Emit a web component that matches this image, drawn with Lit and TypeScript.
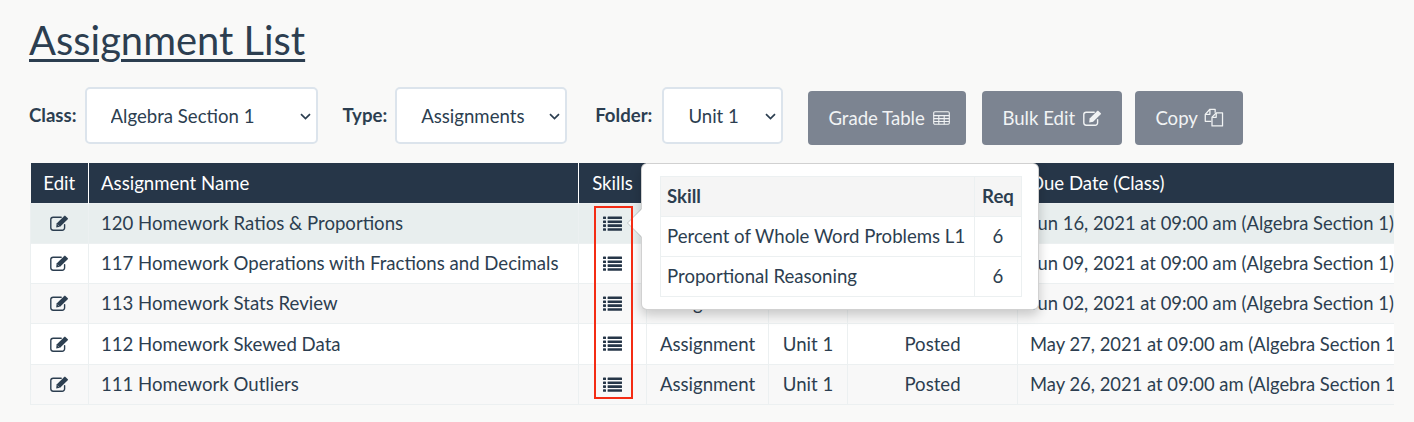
import { LitElement, html, css, svg } from "lit";
import { customElement } from "lit/decorators.js";

const editIcon = (cls: string) => html`<svg class=${cls} viewBox="0 0 19 16" fill="none">
  <path d="M14.6 9.6v3.2a2.4 2.4 0 0 1-2.4 2.4H3.2A2.4 2.4 0 0 1 .8 12.8V4.6a2.4 2.4 0 0 1 2.4-2.4h8" stroke="currentColor" stroke-width="1.4" stroke-linecap="round"/>
  <path d="M6.6 8.4 14 1.2l.9-.6 3.2 3-.6.9-7.4 7.3-3.9.6z" fill="currentColor"/>
  <path d="M7.6 9.6l2 2" stroke="#fff" stroke-opacity=".5" stroke-width=".8"/>
</svg>`;

const listIcon = html`<svg class="list" viewBox="0 0 19 15" fill="currentColor">
  <rect x="0" y="0.5" width="3" height="2.6" rx=".6"/><rect x="4.6" y="0.5" width="14.4" height="2.6" rx=".4"/>
  <rect x="0" y="4.4" width="3" height="2.6" rx=".6"/><rect x="4.6" y="4.4" width="14.4" height="2.6" rx=".4"/>
  <rect x="0" y="8.3" width="3" height="2.6" rx=".6"/><rect x="4.6" y="8.3" width="14.4" height="2.6" rx=".4"/>
  <rect x="0" y="12.2" width="3" height="2.6" rx=".6"/><rect x="4.6" y="12.2" width="14.4" height="2.6" rx=".4"/>
</svg>`;

const tableIcon = html`<svg class="btn-icon" viewBox="0 0 17 14" fill="none" stroke="currentColor" stroke-width="1.1">
  <rect x=".7" y=".7" width="15.6" height="12.6" rx="1.2"/>
  <path d="M.7 4.6h15.6M.7 7.6h15.6M.7 10.5h15.6M5.8 4.6v8.7M11.2 4.6v8.7"/>
</svg>`;

const copyIcon = html`<svg class="btn-icon copy" viewBox="0 0 19 18" fill="none" stroke="currentColor" stroke-width="1.2" stroke-linejoin="round">
  <path d="M7 12.6H1.2V6L5.6 1.2h5v3.4"/><path d="M5.6 1.4v4.6H1.4"/>
  <path d="M7.6 17V8.8l4-4.2h6v12.4z"/><path d="M11.6 4.8v4H7.8"/>
</svg>`;

const chevron = svg`<path d="M1 1.2 5.5 5.6 10 1.2" fill="none" stroke="currentColor" stroke-width="1.7"/>`;

interface Row { name: string; type: string; folder: string; status: string; due: string }
const rows: Row[] = [
  { name: "120 Homework Ratios & Proportions", type: "Assignment", folder: "Unit 1", status: "Posted", due: "Jun 16, 2021 at 09:00 am (Algebra Section 1)" },
  { name: "117 Homework Operations with Fractions and Decimals", type: "Assignment", folder: "Unit 1", status: "Posted", due: "Jun 09, 2021 at 09:00 am (Algebra Section 1)" },
  { name: "113 Homework Stats Review", type: "Assignment", folder: "Unit 1", status: "Posted", due: "Jun 02, 2021 at 09:00 am (Algebra Section 1)" },
  { name: "112 Homework Skewed Data", type: "Assignment", folder: "Unit 1", status: "Posted", due: "May 27, 2021 at 09:00 am (Algebra Section 1)" },
  { name: "111 Homework Outliers", type: "Assignment", folder: "Unit 1", status: "Posted", due: "May 26, 2021 at 09:00 am (Algebra Section 1)" },
];

@customElement("app-root")
export class AppRoot extends LitElement {
  static styles = css`
    :host {
      display: block;
      width: 1414px;
      height: 422px;
      box-sizing: border-box;
      padding: 16px 20px 0 29px;
      background: #f9f9f8;
      color: #2c3e50;
      font-family: Lato, "Open Sans", sans-serif;
      font-size: 18.6px;
      overflow: hidden;
    }
    h1 {
      margin: 0;
      font-size: 39.9px;
      line-height: 48px;
      font-weight: 400;
      text-decoration: underline;
      text-decoration-thickness: 3px;
      text-underline-offset: 4px;
      color: #2c3e50;
    }
    .toolbar {
      display: flex;
      align-items: center;
      margin-top: 22px;
      height: 58px;
    }
    label { font-weight: 700; font-size: 18.6px; margin-right: 8px; white-space: nowrap; }
    label.lf { margin-right: 10px; }
    .sel { position: relative; display: block; height: 57px; margin-right: 25px; flex: none; }
    .sel.w2box { margin-right: 28px; }
    select {
      appearance: none;
      height: 57px;
      border: 2px solid #dce4ec;
      border-radius: 5px;
      background: #fff;
      color: #2c3e50;
      font: 400 18.6px Lato, sans-serif;
      padding: 2px 0 0 24px;
      box-sizing: border-box;
      display: block;
    }
    .w1 { width: 233px; }
    .w2 { width: 172px; }
    .w3 { width: 121px; }
    .chev {
      position: absolute;
      right: 7px;
      top: 26px;
      width: 11px;
      height: 7px;
      color: #2c3e50;
      pointer-events: none;
    }
    .btn {
      display: flex;
      align-items: center;
      justify-content: space-between;
      flex: none;
      height: 54px;
      margin-top: 5px;
      box-sizing: border-box;
      padding: 0 20px;
      background: #7c8491;
      color: #f1f3f4;
      border-radius: 4px;
      font-size: 18.6px;
      white-space: nowrap;
    }
    .b1 { width: 158px; margin-right: 16px; padding-right: 16px; }
    .b2 { width: 140px; margin-right: 13px; }
    .b3 { width: 108px; padding-right: 19px; }
    .btn-icon { width: 17px; height: 14px; display: block; }
    .btn-icon.bulk { width: 19px; height: 16px; }
    .btn-icon.copy { height: 19px; width: 20px; }
    .edit-btn { width: 19px; height: 16px; display: block; }
    .wrap {
      position: relative;
      margin-top: 19px;
      width: 1364px;
      margin-left: 1px;
      overflow: hidden;
      height: 245px;
    }
    table.main {
      table-layout: fixed;
      border-collapse: collapse;
      width: 1420px;
    }
    .main th {
      background: #263648;
      color: #fff;
      font-weight: 400;
      font-size: 18.6px;
      text-align: left;
      height: 40px;
      padding: 0 12px;
      border-right: 1px solid #fff;
      box-sizing: border-box;
      white-space: nowrap;
    }
    .main th.c { text-align: center; padding: 0; }
    .main td {
      height: 40px;
      padding: 0 12px;
      border: 1px solid #ecf0f1;
      box-sizing: border-box;
      white-space: nowrap;
      overflow: hidden;
      font-size: 18.6px;
      color: #2c3e50;
    }
    .main tbody tr:nth-child(4) td { height: 41px; }
    .main td.c { text-align: center; padding: 0; }
    .main td.due { font-size: 18.4px; }
    .main td svg { margin: 0 auto; }
    tbody tr { background: #fff; }
    tbody tr.odd { background: #f8f8f8; }
    tbody tr.hl { background: #e8eeee; }
    .list { width: 19px; height: 15px; display: block; color: #263648; }
    .pop {
      position: absolute;
      left: 611px;
      top: 0;
      width: 398px;
      height: 147px;
      box-sizing: border-box;
      padding: 12px 17px 0 18px;
      background: #fff;
      border: 1px solid rgba(0, 0, 0, 0.18);
      border-radius: 6px;
      box-shadow: 0 5px 12px rgba(0, 0, 0, 0.2);
      z-index: 2;
    }
    .arrow {
      position: absolute;
      left: 598px;
      top: 46px;
      width: 0;
      height: 0;
      border-style: solid;
      border-width: 14px 14px 14px 0;
      border-color: transparent #fff transparent transparent;
      filter: drop-shadow(-1px 0 0 rgba(0, 0, 0, 0.16));
      z-index: 3;
    }
    .pop table {
      border-collapse: collapse;
      width: 361px;
      table-layout: fixed;
    }
    .pop th, .pop td {
      border: 1px solid #ecf0f1;
      height: 40px;
      padding: 0 6px 2px;
      box-sizing: border-box;
      font-size: 18.6px;
      text-align: left;
      white-space: nowrap;
      color: #2c3e50;
    }
    .pop th { background: #f5f5f5; font-weight: 700; }
    .pop .r { text-align: center; padding: 0 0 2px; }
    .red {
      position: absolute;
      left: 564px;
      top: 43px;
      width: 39px;
      height: 193px;
      box-sizing: border-box;
      border: 2px solid #f42c14;
      z-index: 4;
      pointer-events: none;
    }
  `;

  render() {
    return html`
      <h1>Assignment List</h1>
      <div class="toolbar">
        <label>Class:</label>
        <div class="sel"><select class="w1"><option>Algebra Section 1</option></select><svg class="chev" viewBox="0 0 11 7">${chevron}</svg></div>
        <label>Type:</label>
        <div class="sel w2box"><select class="w2"><option>Assignments</option></select><svg class="chev" viewBox="0 0 11 7">${chevron}</svg></div>
        <label class="lf">Folder:</label>
        <div class="sel"><select class="w3"><option>Unit 1</option></select><svg class="chev" viewBox="0 0 11 7">${chevron}</svg></div>
        <div class="btn b1">Grade Table ${tableIcon}</div>
        <div class="btn b2">Bulk Edit ${editIcon("btn-icon bulk")}</div>
        <div class="btn b3">Copy ${copyIcon}</div>
      </div>
      <div class="wrap">
        <table class="main">
          <colgroup>
            <col style="width:58px" /><col style="width:490px" /><col style="width:68px" />
            <col style="width:122px" /><col style="width:79px" /><col style="width:170px" /><col style="width:433px" />
          </colgroup>
          <thead>
            <tr>
              <th class="c">Edit</th><th>Assignment Name</th><th class="c">Skills</th>
              <th class="c">Type</th><th class="c">Folder</th><th class="c">Status</th><th>Due Date (Class)</th>
            </tr>
          </thead>
          <tbody>
            ${rows.map((r, i) => html`
              <tr class=${i === 0 ? "hl" : i % 2 === 0 ? "odd" : ""}>
                <td class="c">${editIcon("edit-btn")}</td>
                <td>${r.name}</td>
                <td class="c">${listIcon}</td>
                <td class="c">${r.type}</td>
                <td class="c">${r.folder}</td>
                <td class="c">${r.status}</td>
                <td class="due">${r.due}</td>
              </tr>`)}
          </tbody>
        </table>
        <div class="arrow"></div>
        <div class="pop">
          <table>
            <colgroup><col style="width:314px" /><col style="width:47px" /></colgroup>
            <thead><tr><th>Skill</th><th class="r">Req</th></tr></thead>
            <tbody>
              <tr><td>Percent of Whole Word Problems L1</td><td class="r">6</td></tr>
              <tr><td>Proportional Reasoning</td><td class="r">6</td></tr>
            </tbody>
          </table>
        </div>
        <div class="red"></div>
      </div>
    `;
  }
}
